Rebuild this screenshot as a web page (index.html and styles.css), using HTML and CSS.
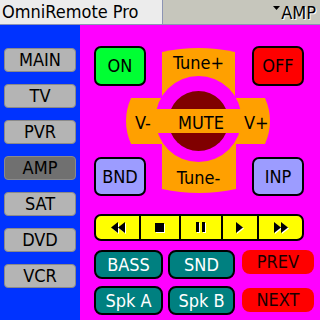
FILE: index.html
```html
<html>
  <head>
    <link rel="stylesheet" href="styles.css">
  </head>
  <body>
    <div class='screen'>
      <div class='titlebar'>
        <div class='title'>OmniRemote Pro</div>
        <div class='device'>
          <svg class='drop' width='7' height='5' viewBox='0 0 7 5'><path d='M0,0 H7 L3.5,4 Z' fill='#000'/></svg>
          <span>AMP</span>
        </div>
      </div>
      <div class='body'>
        <div class='sidebar'>
          <div class='tab'>MAIN</div>
          <div class='tab'>TV</div>
          <div class='tab'>PVR</div>
          <div class='tab active'>AMP</div>
          <div class='tab'>SAT</div>
          <div class='tab'>DVD</div>
          <div class='tab'>VCR</div>
        </div>
        <div class='panel'>
          <div class='pad'>
            <svg class='cross' width='160' height='150' viewBox='0 0 160 150'>
              <path d='M43,6 Q79.5,-2 116,6 V80 H43 Z' fill='#ffa000'/>
              <path d='M43,70 H117 V143 Q80,151 43,143 Z' fill='#ffa000'/>
              <path d='M12,52 H146 Q156,75 146,98 H12 Q2,75 12,52 Z' fill='#ffa000'/>
              <circle cx='79.5' cy='73' r='43' fill='#ff00ff'/>
              <circle cx='79.5' cy='75' r='30' fill='#800000'/>
              <rect x='36' y='63' width='87' height='24' fill='#ffa000'/>
              <text x='79.5' y='23' text-anchor='middle'>Tune+</text>
              <text x='79.5' y='138' text-anchor='middle'>Tune-</text>
              <text x='16' y='83'>V-</text>
              <text x='82' y='83' text-anchor='middle'>MUTE</text>
              <text x='125' y='83'>V+</text>
            </svg>
            <div class='btn on'>ON</div>
            <div class='btn off'>OFF</div>
            <div class='btn bnd'>BND</div>
            <div class='btn inp'>INP</div>
          </div>
          <div class='transport'>
            <div class='seg s1'>
              <svg width='14' height='11' viewBox='0 0 14 11'><path d='M7,0 V11 L0,5.5 Z M14,0 V11 L7,5.5 Z' fill='#000'/></svg>
            </div>
            <div class='seg s2'>
              <svg width='10' height='10' viewBox='0 0 10 10'><rect width='9' height='9' fill='#000'/></svg>
            </div>
            <div class='seg s3'>
              <svg width='10' height='11' viewBox='0 0 10 11'><rect width='3' height='10' fill='#000'/><rect x='6' width='3' height='10' fill='#000'/></svg>
            </div>
            <div class='seg s4'>
              <svg width='8' height='12' viewBox='0 0 8 12'><path d='M0,0 L7,5.5 L0,11 Z' fill='#000'/></svg>
            </div>
            <div class='seg s5'>
              <svg width='14' height='11' viewBox='0 0 14 11'><path d='M0,0 V11 L7,5.5 Z M7,0 V11 L14,5.5 Z' fill='#000'/></svg>
            </div>
          </div>
          <div class='keys'>
            <div class='key'>BASS</div>
            <div class='key'>SND</div>
            <div class='jump'>PREV</div>
            <div class='key'>Spk A</div>
            <div class='key'>Spk B</div>
            <div class='jump next'>NEXT</div>
          </div>
        </div>
      </div>
    </div>
  </body>
</html>
```

FILE: styles.css
```css
body {
  margin: 0;
  font-family: "DejaVu Sans Condensed", "DejaVu Sans", sans-serif;
  font-stretch: condensed;
  font-size: 18px;
}
.screen {
  width: 320px;
  height: 320px;
  overflow: hidden;
  display: flex;
  flex-direction: column;
}

.titlebar {
  height: 24px;
  display: flex;
  flex-direction: row;
  border-bottom: 1px solid #8c94b4;
  background: #c6c6bc;
}
.title {
  width: 160px;
  padding-left: 2px;
  background: #ececec;
  border-right: 1px solid #8c94b4;
  line-height: 24px;
}
.device {
  flex: 1;
  display: flex;
  justify-content: flex-end;
  align-items: center;
  padding-right: 4px;
}
.device .drop {
  align-self: flex-start;
  margin-top: 6px;
  margin-right: 1px;
}
.device span {
  text-shadow: 1px 1px 0 #fff;
}

.body {
  flex: 1;
  display: flex;
  flex-direction: row;
}
.sidebar {
  width: 80px;
  background: #0033ff;
  padding: 23px 0 0 4px;
  box-sizing: border-box;
  display: flex;
  flex-direction: column;
  gap: 12px;
}
.tab {
  width: 72px;
  height: 24px;
  box-sizing: border-box;
  background: #b4b4b4;
  border: 1px solid #8a8a8a;
  border-radius: 4px;
  text-align: center;
  line-height: 22px;
}
.tab.active {
  background: #707070;
}

.panel {
  flex: 1;
  background: #ff00ff;
  padding: 21px 0 0 14px;
}

.pad {
  width: 210px;
  height: 147px;
  display: grid;
  grid-template-columns: 52px 1fr 52px;
  grid-template-rows: 40px 1fr 39px;
}
.cross {
  grid-row: 1 / 4;
  grid-column: 1 / 4;
  justify-self: center;
  align-self: center;
}
.cross text {
  font-family: "DejaVu Sans Condensed", "DejaVu Sans", sans-serif;
  font-stretch: condensed;
  font-size: 18px;
  fill: #000;
}
.btn {
  box-sizing: border-box;
  border: 2px solid #000;
  border-radius: 7px;
  text-align: center;
  line-height: 36px;
}
.on { grid-row: 1; grid-column: 1; background: #00ff33; }
.off { grid-row: 1; grid-column: 3; background: #ff0000; }
.bnd { grid-row: 3; grid-column: 1; background: #9c9cff; }
.inp { grid-row: 3; grid-column: 3; background: #9c9cff; }

.transport {
  margin-top: 21px;
  width: 210px;
  height: 27px;
  box-sizing: border-box;
  background: #ffff00;
  border: 2px solid #000;
  border-radius: 7px;
  display: flex;
  flex-direction: row;
}
.seg {
  box-sizing: border-box;
  display: flex;
  justify-content: center;
  align-items: center;
}
.seg svg {
  filter: drop-shadow(1px 1px 0 #fff);
}
.seg + .seg {
  border-left: 2px solid #000;
}
.s1 { width: 43px; }
.s2 { width: 40px; }
.s3 { width: 42px; }
.s4 { width: 36px; }
.s5 { width: 45px; }

.keys {
  margin-top: 9px;
  display: grid;
  grid-template-columns: 69px 69px 72px;
  grid-template-rows: 29px 29px;
  column-gap: 5px;
  row-gap: 7px;
}
.keys .key:nth-child(2), .keys .key:nth-child(5) {
  margin-right: 2px;
}
.key {
  box-sizing: border-box;
  background: #008080;
  color: #fff;
  border: 2px solid #000;
  border-radius: 8px;
  text-align: center;
  line-height: 25px;
}
.jump {
  height: 24px;
  background: #ff0000;
  border-radius: 8px;
  text-align: center;
  line-height: 24px;
  color: #1a0000;
}
.jump.next {
  margin-top: 2px;
}
```
